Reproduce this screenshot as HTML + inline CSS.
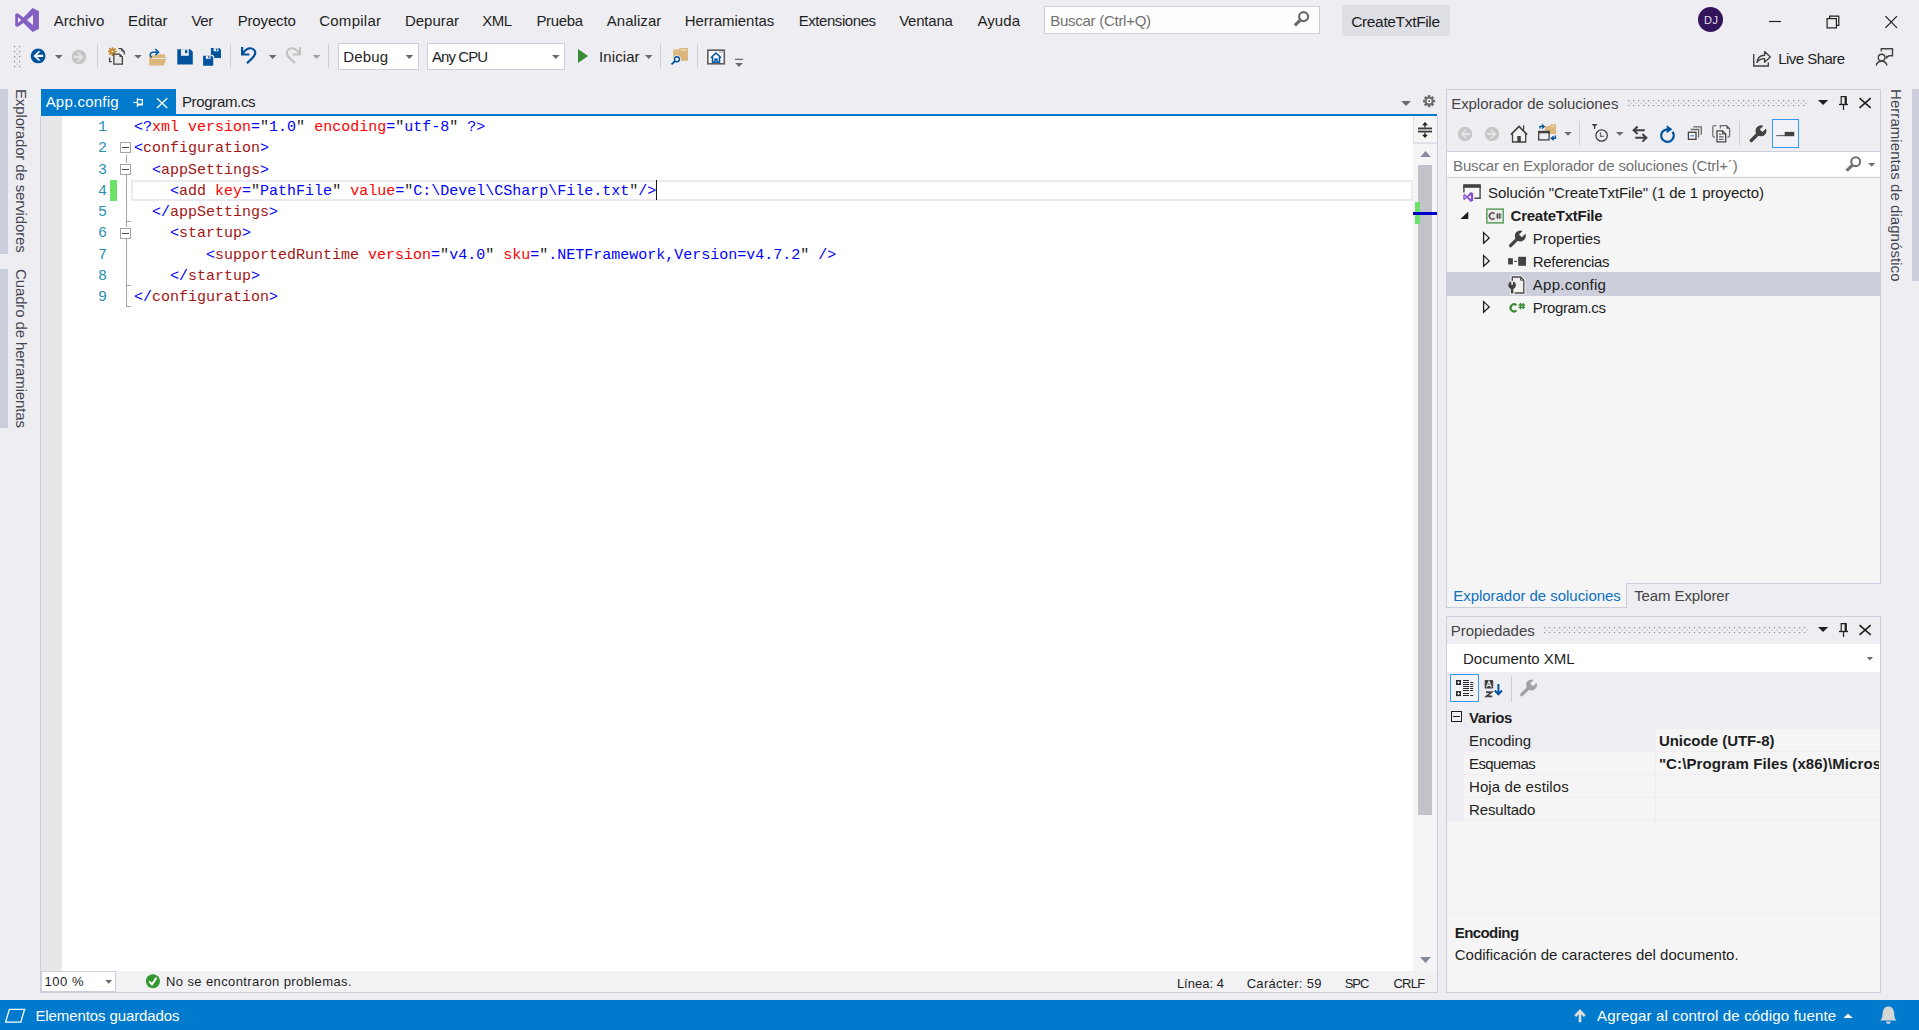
<!DOCTYPE html>
<html><head><meta charset="utf-8"><title>CreateTxtFile - Microsoft Visual Studio</title>
<style>
*{box-sizing:border-box;margin:0;padding:0}
html,body{width:1919px;height:1030px;overflow:hidden}
body{position:relative;background:#eeeef2;font-family:"Liberation Sans",sans-serif;font-size:15px;color:#1e1e1e}
.a{position:absolute}
.t{position:absolute;white-space:pre;line-height:1;display:block}
.b{position:absolute;background:#cccedb}
.v{position:absolute;writing-mode:vertical-rl;white-space:pre;line-height:1;font-size:15px;color:#444450}
.code{position:absolute;left:134px;font-family:"Liberation Mono",monospace;font-size:15px;line-height:1;white-space:pre;height:16px}
.ln{position:absolute;left:62px;width:45px;text-align:right;font-family:"Liberation Mono",monospace;font-size:15px;line-height:1;color:#2b91af}
.k{color:#0000ff}.e{color:#a31515}.r{color:#ff0000}.q{color:#1e1e1e}
.fb{position:absolute;left:120px;width:11px;height:11px;border:1px solid #a5a5a5;background:#fff}
.fb:after{content:"";position:absolute;left:1px;top:4px;width:7px;height:1px;background:#4a4a4a}
.g{position:absolute;background:#a5a5a5}
svg{position:absolute;overflow:visible}
</style></head><body>

<!-- ================= left auto-hide strip ================= -->
<div class="a" style="left:0;top:89px;width:8px;height:165px;background:#cccedb"></div>
<div class="a" style="left:0;top:269px;width:8px;height:159px;background:#cccedb"></div>
<div class="v" id="v1" style="left:14px;top:89px;letter-spacing:-0.13px">Explorador de servidores</div>
<div class="v" id="v2" style="left:14px;top:269px;letter-spacing:-0.13px">Cuadro de herramientas</div>

<!-- ================= right auto-hide strip ================= -->
<div class="a" style="left:1912px;top:89px;width:7px;height:192px;background:#cccedb"></div>
<div class="v" id="v3" style="left:1889px;top:89px;letter-spacing:0.06px">Herramientas de diagnóstico</div>

<!-- ================= title bar widgets ================= -->
<div class="a" style="left:1044px;top:6px;width:276px;height:28px;background:#fefefe;border:1px solid #cccedb"></div>
<div class="a" style="left:1342px;top:5px;width:108px;height:31px;background:#dddfe5"></div>
<div class="a" style="left:1698px;top:7px;width:25px;height:25px;border-radius:50%;background:#32145a"></div>

<!-- ================= toolbar combos ================= -->
<div class="a" style="left:338px;top:43px;width:81px;height:27px;background:#fff;border:1px solid #cccedb"></div>
<div class="a" style="left:427px;top:43px;width:138px;height:27px;background:#fff;border:1px solid #cccedb"></div>

<!-- ================= document well ================= -->
<div class="a" style="left:41px;top:89px;width:135px;height:25px;background:#007acc"></div>
<div class="a" style="left:41px;top:114px;width:1396px;height:2px;background:#007acc"></div>
<div class="a" style="left:40px;top:116px;width:1px;height:877px;background:#cccedb"></div>
<div class="a" style="left:41px;top:116px;width:1396px;height:855px;background:#fff"></div>
<div class="a" style="left:41px;top:116px;width:21px;height:855px;background:#e6e7e8"></div>
<!-- scrollbar -->
<div class="a" style="left:1413px;top:116px;width:24px;height:855px;background:#f5f5f5"></div>
<div class="a" style="left:1413px;top:116px;width:24px;height:28px;background:#f5f5f5;border-left:1px solid #dfdfe8;border-bottom:2px solid #dfdfe8"></div>
<div class="a" style="left:1418px;top:165px;width:14px;height:650px;background:#c2c3c9"></div>
<div class="a" style="left:1415px;top:202px;width:5px;height:22px;background:#6ce26c"></div>
<div class="a" style="left:1413px;top:212px;width:24px;height:3px;background:#0000cd"></div>
<div class="a" style="left:1437px;top:116px;width:1px;height:877px;background:#cccedb"></div>
<!-- bottom editor bar -->
<div class="a" style="left:41px;top:971px;width:1396px;height:21px;background:#f2f2f5"></div>
<div class="a" style="left:40px;top:992px;width:1398px;height:1px;background:#cccedb"></div>
<div class="a" style="left:41px;top:971px;width:75px;height:21px;background:#fff;border:1px solid #cccedb"></div>

<!-- current line + change bar + caret -->
<div class="a" style="left:131px;top:180px;width:1282px;height:21px;border:2px solid #eaeaf2"></div>
<div class="a" style="left:110px;top:180px;width:7px;height:21px;background:#6ce26c"></div>
<div class="a" style="left:656px;top:180px;width:1px;height:20px;background:#1a1a1a"></div>

<!-- outlining -->
<div class="g" style="left:126px;top:155px;width:1px;height:8px"></div>
<div class="g" style="left:126px;top:175px;width:1px;height:52px"></div>
<div class="g" style="left:126px;top:221px;width:5px;height:1px"></div>
<div class="g" style="left:126px;top:238px;width:1px;height:69px"></div>
<div class="g" style="left:126px;top:285px;width:5px;height:1px"></div>
<div class="g" style="left:126px;top:306px;width:5px;height:1px"></div>
<div class="fb" style="top:142px"></div>
<div class="fb" style="top:164px"></div>
<div class="fb" style="top:228px"></div>

<!-- line numbers -->
<div class="ln" style="top:120px">1</div><div class="ln" style="top:141px">2</div><div class="ln" style="top:163px">3</div>
<div class="ln" style="top:184px">4</div><div class="ln" style="top:205px">5</div><div class="ln" style="top:226px">6</div>
<div class="ln" style="top:248px">7</div><div class="ln" style="top:269px">8</div><div class="ln" style="top:290px">9</div>
<!-- code -->
<div class="code" style="top:120px"><span class="k">&lt;?</span><span class="r">xml</span> <span class="r">version</span><span class="k">=</span><span class="q">"</span><span class="k">1.0</span><span class="q">"</span> <span class="r">encoding</span><span class="k">=</span><span class="q">"</span><span class="k">utf-8</span><span class="q">"</span> <span class="k">?&gt;</span></div>
<div class="code" style="top:141px"><span class="k">&lt;</span><span class="e">configuration</span><span class="k">&gt;</span></div>
<div class="code" style="top:163px">  <span class="k">&lt;</span><span class="e">appSettings</span><span class="k">&gt;</span></div>
<div class="code" style="top:184px">    <span class="k">&lt;</span><span class="e">add</span> <span class="r">key</span><span class="k">=</span><span class="q">"</span><span class="k">PathFile</span><span class="q">"</span> <span class="r">value</span><span class="k">=</span><span class="q">"</span><span class="k">C:\Devel\CSharp\File.txt</span><span class="q">"</span><span class="k">/&gt;</span></div>
<div class="code" style="top:205px">  <span class="k">&lt;/</span><span class="e">appSettings</span><span class="k">&gt;</span></div>
<div class="code" style="top:226px">    <span class="k">&lt;</span><span class="e">startup</span><span class="k">&gt;</span></div>
<div class="code" style="top:248px">        <span class="k">&lt;</span><span class="e">supportedRuntime</span> <span class="r">version</span><span class="k">=</span><span class="q">"</span><span class="k">v4.0</span><span class="q">"</span> <span class="r">sku</span><span class="k">=</span><span class="q">"</span><span class="k">.NETFramework,Version=v4.7.2</span><span class="q">"</span> <span class="k">/&gt;</span></div>
<div class="code" style="top:269px">    <span class="k">&lt;/</span><span class="e">startup</span><span class="k">&gt;</span></div>
<div class="code" style="top:290px"><span class="k">&lt;/</span><span class="e">configuration</span><span class="k">&gt;</span></div>

<!-- ================= solution explorer ================= -->
<div class="a" style="left:1446px;top:89px;width:435px;height:495px;border:1px solid #cccedb;background:#eeeef2"></div>
<div class="a" style="left:1447px;top:151px;width:433px;height:27px;background:#fff;border-top:1px solid #cccedb;border-bottom:1px solid #cccedb"></div>
<div class="a" style="left:1447px;top:178px;width:433px;height:405px;background:#f5f5f5"></div>
<div class="a" style="left:1447px;top:272px;width:433px;height:24px;background:#cccedb"></div>
<div class="a" style="left:1772px;top:119px;width:27px;height:29px;border:1px solid #3399ff;background:#f3f3f7"></div>
<!-- tabs -->
<div class="a" style="left:1446px;top:583px;width:181px;height:25px;background:#f5f5f5;border:1px solid #cccedb;border-top:none"></div>

<!-- ================= properties ================= -->
<div class="a" style="left:1446px;top:616px;width:435px;height:377px;border:1px solid #cccedb;background:#eeeef2"></div>
<div class="a" style="left:1447px;top:644px;width:433px;height:28px;background:#fff"></div>
<div class="a" style="left:1450px;top:674px;width:29px;height:28px;border:1px solid #3399ff;background:#f3f3f7"></div>
<div class="a" style="left:1511px;top:676px;width:1px;height:26px;background:#cccedb"></div>
<div class="a" style="left:1447px;top:729px;width:433px;height:263px;background:#f5f5f5"></div>
<div class="a" style="left:1447px;top:729px;width:17px;height:92px;background:#eeeef2"></div>
<div class="a" style="left:1464px;top:729px;width:191px;height:23px;background:#eeeef2"></div>
<div class="a" style="left:1464px;top:751px;width:416px;height:1px;background:#eeeef2"></div>
<div class="a" style="left:1464px;top:774px;width:416px;height:1px;background:#eeeef2"></div>
<div class="a" style="left:1464px;top:797px;width:416px;height:1px;background:#eeeef2"></div>
<div class="a" style="left:1447px;top:820px;width:433px;height:1px;background:#eeeef2"></div>
<div class="a" style="left:1655px;top:729px;width:1px;height:92px;background:#eeeef2"></div>
<div class="a" style="left:1447px;top:913px;width:433px;height:1px;background:#eeeef2"></div>
<div class="a" style="left:1451px;top:711px;width:11px;height:11px;border:1px solid #1e1e1e"></div>
<div class="a" style="left:1453px;top:716px;width:7px;height:1px;background:#1e1e1e"></div>

<!-- ================= status bar ================= -->
<div class="a" style="left:0;top:1000px;width:1919px;height:30px;background:#007acc"></div>

<svg class="a" style="left:0;top:0" width="1919" height="1030" viewBox="0 0 1919 1030">
<defs>
<pattern id="gripA" x="1628" y="100" width="5" height="5" patternUnits="userSpaceOnUse"><rect x="0" y="0" width="1.25" height="1.25" fill="#8c8c92"/><rect x="2.5" y="2.5" width="1.25" height="1.25" fill="#b6b6bc"/></pattern>
<pattern id="gripB" x="1543.9" y="627" width="5" height="5" patternUnits="userSpaceOnUse"><rect x="0" y="0" width="1.25" height="1.25" fill="#8c8c92"/><rect x="2.5" y="2.5" width="1.25" height="1.25" fill="#b6b6bc"/></pattern>
<g id="dd"><path d="M0 0h7.6l-3.8 3.9z"/></g>
<mask id="wm"><rect x="-2" y="-2" width="22" height="22" fill="#000"/><circle cx="12" cy="5.600" r="5.500" fill="#fff"/><path d="M10 7.600L2.300 15.300" stroke="#fff" stroke-width="3.400" stroke-linecap="round"/><path d="M10.700 4.200L13.500 6.900 18.500 1.900 15.700 -0.800z" fill="#000"/></mask>
<g id="wrench"><rect x="-2" y="-2" width="22" height="22" mask="url(#wm)"/></g>
<g id="tri"><path d="M0.6 0.6l5.6 5.3-5.6 5.4z" fill="none" stroke="#1e1e1e" stroke-width="1.3" stroke-linejoin="miter"/></g>
</defs>

<!-- VS logo -->
<path fill="#865fc5" fill-rule="evenodd" d="M15.2 14.2L17.4 13 23.4 17.4 32.5 7.9 38.9 10.9V28.9L32.5 32.1 23.4 23 17.4 27 15.2 25.8zM18 16.9V23.1L21.1 20zM33 14.9L26.9 20 33 25.1z"/>

<!-- title search magnifier -->
<g stroke="#6a6a6a" fill="none"><circle cx="1303.6" cy="16.6" r="4.5" stroke-width="2.2"/><path d="M1300.2 20.2L1294.9 25.3" stroke-width="3.2"/></g>

<!-- window buttons -->
<path d="M1769 21.5h12" stroke="#1e1e1e" stroke-width="1.2"/>
<g fill="none" stroke="#1e1e1e" stroke-width="1.2"><rect x="1827.1" y="18.6" width="9.3" height="9.3"/><path d="M1829.6 18.6V16.2H1838.8V25.4H1836.4"/></g>
<path d="M1885.4 16.2L1897 27.8M1897 16.2L1885.4 27.8" stroke="#1e1e1e" stroke-width="1.2"/>

<!-- live share -->
<g fill="none" stroke="#424242" stroke-width="1.4"><path d="M1753.7 54V66H1768.3V62.600"/><path d="M1757 62.5C1757.5 57.5 1760.5 55.2 1764.6 55.2V51.6L1770.3 56.9 1764.6 62.2V58.6C1761.3 58.5 1758.8 59.6 1757 62.5z" stroke-linejoin="round"/></g>
<!-- feedback -->
<g fill="none" stroke="#424242" stroke-width="1.4"><circle cx="1881.6" cy="57.6" r="3.3"/><path d="M1876.2 65.6C1876.8 62.3 1879 61.2 1881.6 61.2S1886.4 62.3 1887 65.6"/><path d="M1881.3 51.5V48.8H1892.5V55.8H1888.9L1886.6 57.8V55.8"/></g>

<!-- toolbar grip -->
<g fill="#8c8c92"><rect x="14" y="46" width="1.25" height="1.25"/><rect x="19" y="46" width="1.25" height="1.25"/><rect x="14" y="51" width="1.25" height="1.25"/><rect x="19" y="51" width="1.25" height="1.25"/><rect x="14" y="56" width="1.25" height="1.25"/><rect x="19" y="56" width="1.25" height="1.25"/><rect x="14" y="61" width="1.25" height="1.25"/><rect x="19" y="61" width="1.25" height="1.25"/><rect x="14" y="66" width="1.25" height="1.25"/><rect x="19" y="66" width="1.25" height="1.25"/></g>
<g fill="#b8b8be"><rect x="16.5" y="48.5" width="1.25" height="1.25"/><rect x="16.5" y="53.5" width="1.25" height="1.25"/><rect x="16.5" y="58.5" width="1.25" height="1.25"/><rect x="16.5" y="63.5" width="1.25" height="1.25"/></g>

<!-- back / forward -->
<circle cx="38.1" cy="55.9" r="7.4" fill="#00539c"/><path d="M33.4 55.9L38.3 51.2H40.6L37.2 54.7H43.2V57.1H37.2L40.6 60.6H38.3z" fill="#fff"/>
<use href="#dd" x="55" y="55" fill="#6a6a6a"/>
<circle cx="78.9" cy="57" r="7.3" fill="#c6c6c6"/><path d="M83.6 57L78.7 52.3H76.4L79.8 55.8H73.8V58.2H79.8L76.4 61.7H78.7z" fill="#e4e4e6"/>
<rect x="97" y="44" width="1" height="24" fill="#cccedb"/>

<!-- new item -->
<g stroke="#c27d1a" stroke-width="1.5"><path d="M112.4 47.2V55.9M108 51.5H116.8M109.3 48.4L115.5 54.6M115.5 48.4L109.3 54.6"/></g>
<circle cx="112.4" cy="51.5" r="1.1" fill="#eeeef2"/>
<g fill="none" stroke="#424242" stroke-width="1.3"><path d="M118.5 48.6H121.3L124.2 51.5V54.5"/><path d="M113.8 54.1H119.5L122.4 57V64.2H113.8z" fill="#e8e8ec"/><path d="M109.6 57.5V61.6H111.8"/></g>
<path d="M119.5 54.1V57H122.4z" fill="#424242"/><path d="M121.3 48.6V51.5H124.2z" fill="#424242"/>
<use href="#dd" x="134.2" y="54.9" fill="#6a6a6a"/>

<!-- open folder -->
<path d="M149.2 65.6V55.6H156.5L157.8 54.2H165V57.2H166.7L163.9 65.6z" fill="#dcb67a"/>
<path d="M152.5 58.4H166.2" stroke="#eeeef2" stroke-width="0.9"/>
<g fill="none" stroke="#00539c" stroke-width="1.5"><path d="M151.6 57.4C149.4 55.8 149.6 52.4 152.8 52.2H158"/><path d="M155.3 49.1L158.5 52.2 155.3 55.3"/></g>

<!-- save -->
<path d="M177.3 49.2H190.2L192.8 51.8V64.4H177.3z" fill="#00539c"/><rect x="181" y="49.2" width="7.8" height="6.6" fill="#e8e8ec"/><rect x="185" y="50.2" width="2.3" height="2.8" fill="#00539c"/>
<!-- save all -->
<path d="M210.9 48.1H219.4L221 49.7V58H210.9z" fill="#00539c"/><rect x="213.6" y="48.1" width="4.8" height="3.2" fill="#e8e8ec"/><rect x="216" y="48.6" width="1.2" height="2" fill="#00539c"/>
<path d="M202.1 54.7H212.6L214.2 56.3V66.6H202.1z" fill="#eeeef2"/>
<path d="M203.1 55.7H211.6L213.2 57.3V65.7H203.1z" fill="#00539c"/><rect x="205.8" y="55.7" width="4.8" height="3.2" fill="#e8e8ec"/><rect x="208.2" y="56.2" width="1.2" height="2" fill="#00539c"/>
<rect x="230" y="44" width="1" height="24" fill="#cccedb"/>

<!-- undo / redo -->
<g fill="none" stroke="#00539c" stroke-width="2.2"><path d="M242.1 47V54.5H249.4"/><path d="M242.6 54C246.5 47.3 252.3 47 254.6 50.5 256.6 53.7 254.3 56.3 251.8 58.6L247 63.3"/></g>
<use href="#dd" x="268.9" y="55" fill="#6a6a6a"/>
<g fill="none" stroke="#c3c3c6" stroke-width="2.2"><path d="M300 47V54.5H292.7"/><path d="M299.5 54C295.600 47.3 289.8 47 287.5 50.5 285.5 53.7 287.8 56.3 290.3 58.6L295.100 63.3"/></g>
<use href="#dd" x="312.8" y="55" fill="#a0a0a4"/>
<rect x="328" y="44" width="1" height="24" fill="#cccedb"/>

<!-- combos arrows -->
<use href="#dd" x="405.600" y="55" fill="#6a6a6a"/>
<use href="#dd" x="552" y="55" fill="#6a6a6a"/>

<!-- start -->
<path d="M578 48.9L588.100 56 578 63.100z" fill="#388a34"/>
<use href="#dd" x="645" y="55.100" fill="#6a6a6a"/>
<rect x="660" y="44" width="1" height="24" fill="#cccedb"/>
<!-- find in files -->
<path d="M673.200 60.800V49.500H678.400L679.700 47.900H688V60.800z" fill="#dcb67a"/><rect x="680.600" y="49.300" width="6" height="1.300" fill="#eeeef2" opacity=".7"/>
<circle cx="676.900" cy="59.200" r="3.900" fill="#eeeef2"/><path d="M675 61.200L670.600 65.300" stroke="#eeeef2" stroke-width="4"/>
<g stroke="#00539c" fill="none"><circle cx="676.900" cy="59.200" r="2.500" stroke-width="1.400" fill="#f4f4f8"/><path d="M675 61.100L671.500 64.400" stroke-width="1.900"/></g>
<rect x="697" y="44" width="1" height="24" fill="#cccedb"/>
<!-- window/home icon -->
<rect x="707.800" y="50.200" width="16.500" height="13.600" fill="#f8f8fa" stroke="#5e5e5e" stroke-width="1.600"/>
<path d="M711 57.800L716 53 721 57.800M712.500 57V62.300H715V59.200H717V62.300H719.500V57" fill="none" stroke="#00539c" stroke-width="1.500"/>
<rect x="719.400" y="51.600" width="1.200" height="1" fill="#5e5e5e"/><rect x="721.400" y="51.600" width="1.200" height="1" fill="#5e5e5e"/>
<!-- overflow -->
<rect x="735" y="58.800" width="8" height="1.200" fill="#6a6a6a"/><path d="M735.200 63H742.800L739 66.900z" fill="#6a6a6a"/>

<!-- tab pin + close -->
<g stroke="#fff" fill="none" stroke-width="1.200"><path d="M133.200 102.500H137.400M137.400 98V107M137.400 99.600H142.400V105H137.400M137.400 104H142.400"/><path d="M157 98.300L167.200 108M167.200 98.300L157 108" stroke-width="1.400"/></g>
<!-- tab well dropdown + gear -->
<path d="M1401.200 100.900H1410.900L1406.050 105.900z" fill="#6a6a6a"/>
<g transform="translate(1429.100 101.100)" fill="#6a6a6a"><circle r="4.300"/><g><rect x="-1.300" y="-6" width="2.600" height="12"/><rect x="-1.300" y="-6" width="2.600" height="12" transform="rotate(45)"/><rect x="-1.300" y="-6" width="2.600" height="12" transform="rotate(90)"/><rect x="-1.300" y="-6" width="2.600" height="12" transform="rotate(135)"/></g><circle r="2.500" fill="#eeeef2"/><circle r="1" fill="#6a6a6a"/></g>
<!-- split icon -->
<rect x="1418" y="128" width="14" height="4" fill="#b4b4b8"/><rect x="1418" y="127.600" width="14" height="1.200" fill="#1e1e1e"/><rect x="1418" y="131.200" width="14" height="1.200" fill="#1e1e1e"/>
<g stroke="#1e1e1e" stroke-width="1.300"><path d="M1425 127.600V124M1425 132.400V136"/></g><path d="M1422.100 125.200L1425 122.100 1427.900 125.200zM1422.100 134.800L1425 137.900 1427.900 134.800z" fill="#1e1e1e"/>
<!-- scrollbar arrows -->
<path d="M1420.300 157L1425.600 151.100 1430.900 157z" fill="#868999"/>
<path d="M1420 957L1425.500 962.900 1431 957z" fill="#868999"/>

<!-- ============ solution explorer title ============ -->
<rect x="1628" y="100" width="179" height="6.300" fill="url(#gripA)"/>
<path d="M1818 99.900H1828.200L1823.100 105z" fill="#1e1e1e"/>
<g id="pinv" stroke="#1e1e1e" fill="none"><path d="M1841.200 104V96.700H1846V104" stroke-width="1.200"/><path d="M1845.600 96.700V104" stroke-width="2"/><path d="M1839 104.500H1848" stroke-width="1.300"/><path d="M1843.500 105V110" stroke-width="1.200"/></g>
<path id="xv" d="M1859.500 98.200L1870.700 107.800M1870.700 98.200L1859.500 107.800" stroke="#1e1e1e" stroke-width="1.600"/>
<!-- toolbar -->
<circle cx="1465" cy="134" r="7.200" fill="#c6c6c6"/><path d="M1460.400 134L1465.200 129.400H1467.500L1464.100 132.800H1470V135.200H1464.100L1467.500 138.600H1465.200z" fill="#e4e4e6"/>
<circle cx="1492" cy="134" r="7.200" fill="#c6c6c6"/><path d="M1496.600 134L1491.800 129.400H1489.500L1492.900 132.800H1487V135.200H1492.900L1489.500 138.600H1491.800z" fill="#e4e4e6"/>
<!-- home -->
<path d="M1512.500 134V142H1525.700V134L1519 127.500z" fill="#f0f0f2"/>
<g fill="none" stroke="#424242"><path d="M1510.900 134.600L1519 126.400 1527.100 134.600" stroke-width="1.700"/><path d="M1512.500 134V142H1525.700V134" stroke-width="1.300"/><path d="M1523.600 130.600V125.200" stroke-width="1.200"/></g><rect x="1517.300" y="136" width="3.500" height="6" fill="#424242"/>
<!-- sync with active doc -->
<path d="M1545 134V126H1549.400L1550.500 124.200H1556V134z" fill="#dcb67a"/><rect x="1551.200" y="125.700" width="3.600" height="0.900" fill="#eeeef2" opacity=".7"/>
<rect x="1538.700" y="131.500" width="10.400" height="8.400" fill="#eeeef2" stroke="#424242" stroke-width="1.300"/><rect x="1538.100" y="130.900" width="11.600" height="2.400" fill="#424242"/>
<g fill="none" stroke="#00539c" stroke-width="1.400"><path d="M1540 128.600V126.400H1543.500M1542 124.400L1544.200 126.400 1542 128.400"/><path d="M1555.400 135.400V138.200H1552M1553.600 136.200L1551.400 138.200 1553.600 140.200"/></g>
<use href="#dd" x="1564.200" y="131.900" fill="#6a6a6a"/>
<rect x="1579" y="121" width="1" height="24" fill="#cccedb"/>
<!-- pending changes filter -->
<path d="M1591.600 124H1597.700L1595.300 126.600V128.900H1594V126.600z" fill="#424242"/>
<g fill="none" stroke="#424242"><circle cx="1601.600" cy="135.500" r="5.700" stroke-width="1.300"/><path d="M1600.500 132.200V136.300H1603.800" stroke-width="1.300" stroke="#6a6a6a"/></g>
<use href="#dd" x="1616" y="131.900" fill="#6a6a6a"/>
<!-- swap arrows -->
<g fill="none" stroke="#424242" stroke-width="2"><path d="M1644.800 130.200H1634M1637.600 126.400L1633.600 130.200 1637.600 134"/><path d="M1635.200 137.800H1646M1642.400 134L1646.400 137.800 1642.400 141.600"/></g>
<!-- refresh -->
<path d="M1672.500 131.800A6.300 6.300 0 1 1 1667 129.300" fill="none" stroke="#00539c" stroke-width="2.300"/><path d="M1666.700 125.200L1672.400 129.300 1666.700 133.300z" fill="#00539c"/>
<!-- collapse all -->
<g fill="none" stroke="#6a6a6a" stroke-width="1.300"><path d="M1693.300 126.800H1701.300V134.800"/><path d="M1690.600 129.500H1698.600V137.500"/></g>
<rect x="1688.400" y="132.300" width="7.600" height="7" fill="#f4f4f6" stroke="#424242" stroke-width="1.300"/><rect x="1690.400" y="135.200" width="3.600" height="1.200" fill="#3b8bd0"/>
<!-- show all files -->
<g fill="none" stroke="#6a6a6a" stroke-width="1.200"><path d="M1716.300 125.700H1714.500Q1712.800 125.700 1712.800 127.400V135.400Q1712.800 137.100 1714.500 137.100H1715"/><path d="M1720.300 128.500V125.700H1726.600L1729.600 128.700V135.400Q1729.600 137.100 1727.900 137.100H1727.400"/></g><path d="M1726.600 125.700V128.700H1729.600z" fill="#424242"/>
<path d="M1717 130.800H1722.500L1725.700 134V141.800H1717z" fill="#f4f4f6" stroke="#424242" stroke-width="1.300"/><path d="M1722.500 130.800V134H1725.700" fill="none" stroke="#424242" stroke-width="1"/>
<g stroke="#424242" stroke-width="1"><path d="M1719 134.300H1721.500M1719 136.800H1723.700M1719 139.300H1723.700"/></g>
<rect x="1739" y="121" width="1" height="24" fill="#cccedb"/>
<use href="#wrench" x="1749" y="125.200" fill="#424242"/>
<!-- preview selected -->
<rect x="1776.200" y="135" width="9" height="1.200" fill="#6a6a6a"/><rect x="1784.700" y="131.900" width="9.500" height="4.300" fill="#424242"/>
<!-- search -->
<g stroke="#717171" fill="none"><circle cx="1855.700" cy="161.700" r="4.400" stroke-width="2.100"/><path d="M1852.500 165.100L1846.600 170.700" stroke-width="3.200"/></g>
<path d="M1868 163H1875.400L1871.700 166.800z" fill="#717171"/>

<!-- tree icons -->
<g fill="none" stroke="#4a4a4a" stroke-width="1.400"><path d="M1463.900 192.600V186H1480.100V198.300H1474.400"/></g><rect x="1463.200" y="184.200" width="17.600" height="3.600" fill="#424242"/>
<path fill="#8a4fd0" fill-rule="evenodd" d="M1463.300 194.700L1464.300 194.100 1467 196.100 1470.700 192 1473.200 193.200V200.700L1470.700 201.900 1467 198.100 1464.300 200.100 1463.300 199.500zM1464.600 195.800V198.400L1465.900 197.100zM1470.900 194.900L1468.300 197.100 1470.900 199.300z"/>
<path d="M1468.300 211.400V219.100H1460.400z" fill="#1e1e1e"/>
<rect x="1486.800" y="209.100" width="16.400" height="13.800" fill="#ececec" stroke="#5da25d" stroke-width="1.500"/>
<g fill="none" stroke="#505050"><path d="M1494.600 213.700A3.100 3.100 0 1 0 1494.600 218.300" stroke-width="1.500"/><path d="M1497.600 213V219M1499.700 213V219M1496 214.900H1501.300M1496 217.100H1501.300" stroke-width="1"/></g>
<use href="#tri" x="1483" y="232"/>
<use href="#wrench" x="1508.300" y="230.300" fill="#424242"/>
<use href="#tri" x="1483" y="255"/>
<rect x="1508.100" y="258.200" width="4.800" height="6.200" fill="#424242"/><rect x="1514.300" y="260.800" width="2.600" height="1.200" fill="#424242"/><rect x="1518.200" y="256.800" width="7.800" height="9" fill="#424242"/>
<!-- config file -->
<path d="M1510.500 275.300H1521.300L1525.500 279.500V294.700H1509.800V288.500Q1507.800 285.500 1510.500 282.500z" fill="#f4f4f6" opacity=".9"/>
<path d="M1512.300 283V277H1520.600L1523.800 280.200V293H1514.600" fill="#f0f0f0" stroke="#4a4a4a" stroke-width="1.300"/><path d="M1520.600 277V280.200H1523.800" fill="none" stroke="#4a4a4a" stroke-width="1"/>
<circle cx="1512.100" cy="285.300" r="3.700" fill="#424242"/><rect x="1510.900" y="287" width="2.400" height="6.600" rx="1" fill="#424242"/><rect x="1511.300" y="280.800" width="1.600" height="4" fill="#f4f4f6"/>
<use href="#tri" x="1483" y="301"/>
<path d="M1516.400 305.300A3.500 3.500 0 1 0 1516.400 310.500" fill="none" stroke="#388a34" stroke-width="2.100"/>
<g stroke="#388a34" stroke-width="1.300"><path d="M1520.500 303V309.200M1523.100 303V309.200M1518.600 305H1525M1518.600 307.300H1525"/></g>

<!-- ============ properties title ============ -->
<rect x="1543.900" y="627" width="264" height="6.300" fill="url(#gripB)"/>
<path d="M1818 626.900H1828.200L1823.100 632z" fill="#1e1e1e"/>
<use href="#pinv" y="527"/><use href="#xv" y="527"/>
<path d="M1866.800 657H1873L1869.900 660.400z" fill="#6a6a6a"/>
<!-- categorized -->
<g fill="#2a2a2a"><rect x="1456" y="680" width="5" height="5"/><rect x="1456" y="691.100" width="5" height="5"/>
<rect x="1463" y="680" width="6" height="1"/><rect x="1463" y="682" width="6" height="1"/><rect x="1463" y="684" width="6" height="1"/><rect x="1463" y="686" width="6" height="1"/><rect x="1463" y="688" width="6" height="1"/><rect x="1463" y="690" width="6" height="1"/><rect x="1463" y="693" width="6" height="1"/><rect x="1463" y="695" width="6" height="1"/>
<rect x="1470.200" y="682" width="3" height="1"/><rect x="1470.200" y="684" width="3" height="1"/><rect x="1470.200" y="686" width="3" height="1"/><rect x="1470.200" y="688" width="3" height="1"/><rect x="1470.200" y="690" width="3" height="1"/><rect x="1470.200" y="695" width="3" height="1"/></g>
<g fill="#fff"><rect x="1457.300" y="682" width="2.400" height="1"/><rect x="1458" y="681.300" width="1" height="2.400"/><rect x="1457.300" y="693.100" width="2.400" height="1"/><rect x="1458" y="692.400" width="1" height="2.400"/></g>
<!-- alphabetical -->
<rect x="1484.700" y="680" width="8.500" height="8.600" rx="0.800" fill="#424242"/><path d="M1486.500 687.200L1488.950 681.300 1491.400 687.200M1487.400 685.400H1490.500" fill="none" stroke="#e8e8ec" stroke-width="1.200"/>
<path d="M1486 692.100H1491.600L1486.400 696.400H1492.200" fill="none" stroke="#424242" stroke-width="1.700"/>
<path d="M1498.400 684V693.500M1494.800 690.500L1498.400 694.300 1502 690.500" fill="none" stroke="#00539c" stroke-width="2"/>
<use href="#wrench" x="1519.500" y="679.300" fill="#a2a2a6"/>

<!-- bottom bar -->
<path d="M105.300 980H112.100L108.700 983.800z" fill="#6a6a6a"/>
<circle cx="152.900" cy="981.200" r="7" fill="#339933"/><path d="M149.200 981.300L152 984.400 156.500 977.700" fill="none" stroke="#fff" stroke-width="2"/>
<!-- status bar -->
<path d="M9.400 1009.300H24.600L20.800 1022.100H5.600z" fill="none" stroke="#fff" stroke-width="1.300"/>
<path d="M1580 1022.300V1011.600M1575.200 1016.200L1580 1011 1584.800 1016.200" fill="none" stroke="#dedede" stroke-width="2.600"/>
<path d="M1843.400 1018H1852.800L1848.100 1013.800z" fill="#fff"/>
<path d="M1880 1020.600C1882.800 1018.800 1882.300 1015 1882.800 1011.700 1883.300 1008.100 1885.600 1006.400 1888.400 1006.400S1893.500 1008.100 1894 1011.700C1894.500 1015 1894 1018.800 1896.800 1020.600z" fill="#d6d6d6"/><path d="M1886 1021.500A2.400 2.400 0 0 0 1890.800 1021.500z" fill="#d6d6d6"/>
</svg>


<span class="t" style="left:53.65px;top:13px;font-size:15px;color:#1e1e1e;letter-spacing:0.111px;">Archivo</span>
<span class="t" style="left:127.90px;top:13px;font-size:15px;color:#1e1e1e;letter-spacing:0.103px;">Editar</span>
<span class="t" style="left:191.40px;top:13px;font-size:15px;color:#1e1e1e;letter-spacing:-0.283px;">Ver</span>
<span class="t" style="left:237.65px;top:13px;font-size:15px;color:#1e1e1e;letter-spacing:-0.143px;">Proyecto</span>
<span class="t" style="left:319.15px;top:13px;font-size:15px;color:#1e1e1e;letter-spacing:0.276px;">Compilar</span>
<span class="t" style="left:404.90px;top:13px;font-size:15px;color:#1e1e1e;letter-spacing:-0.001px;">Depurar</span>
<span class="t" style="left:482.15px;top:13px;font-size:15px;color:#1e1e1e;letter-spacing:-0.447px;">XML</span>
<span class="t" style="left:536.40px;top:13px;font-size:15px;color:#1e1e1e;letter-spacing:-0.335px;">Prueba</span>
<span class="t" style="left:606.65px;top:13px;font-size:15px;color:#1e1e1e;letter-spacing:0.071px;">Analizar</span>
<span class="t" style="left:684.65px;top:13px;font-size:15px;color:#1e1e1e;letter-spacing:-0.030px;">Herramientas</span>
<span class="t" style="left:798.65px;top:13px;font-size:15px;color:#1e1e1e;letter-spacing:-0.427px;">Extensiones</span>
<span class="t" style="left:899.15px;top:13px;font-size:15px;color:#1e1e1e;letter-spacing:-0.227px;">Ventana</span>
<span class="t" style="left:977.40px;top:13px;font-size:15px;color:#1e1e1e;letter-spacing:0.109px;">Ayuda</span>
<span class="t" style="left:1050.15px;top:13px;font-size:15px;color:#717171;letter-spacing:-0.261px;">Buscar (Ctrl+Q)</span>
<span class="t" style="left:1351.15px;top:14px;font-size:15.5px;color:#1e1e1e;letter-spacing:-0.340px;">CreateTxtFile</span>
<span class="t" style="left:1703.90px;top:15px;font-size:11px;color:#e4dfea;letter-spacing:0.647px;">DJ</span>
<span class="t" style="left:1778.20px;top:51px;font-size:15px;color:#1e1e1e;letter-spacing:-0.524px;">Live Share</span>
<span class="t" style="left:343.20px;top:49px;font-size:15px;color:#1e1e1e;letter-spacing:0.174px;">Debug</span>
<span class="t" style="left:431.90px;top:49px;font-size:15px;color:#1e1e1e;letter-spacing:-0.915px;">Any CPU</span>
<span class="t" style="left:599.00px;top:49px;font-size:15px;color:#1e1e1e;letter-spacing:0.097px;">Iniciar</span>
<span class="t" style="left:45.65px;top:94px;font-size:15px;color:#ffffff;letter-spacing:0.229px;">App.config</span>
<span class="t" style="left:181.90px;top:94px;font-size:15px;color:#1e1e1e;letter-spacing:-0.332px;">Program.cs</span>
<span class="t" style="left:1451.20px;top:96px;font-size:15px;color:#444444;letter-spacing:-0.054px;">Explorador de soluciones</span>
<span class="t" style="left:1453.10px;top:158px;font-size:15px;color:#717171;letter-spacing:-0.162px;">Buscar en Explorador de soluciones (Ctrl+´)</span>
<span class="t" style="left:1488.00px;top:185px;font-size:15px;color:#1e1e1e;letter-spacing:-0.099px;">Solución "CreateTxtFile" (1 de 1 proyecto)</span>
<span class="t" style="left:1510.60px;top:208px;font-size:15px;color:#1e1e1e;font-weight:700;letter-spacing:-0.254px;">CreateTxtFile</span>
<span class="t" style="left:1532.80px;top:231px;font-size:15px;color:#1e1e1e;letter-spacing:-0.064px;">Properties</span>
<span class="t" style="left:1532.80px;top:254px;font-size:15px;color:#1e1e1e;letter-spacing:-0.325px;">Referencias</span>
<span class="t" style="left:1532.80px;top:277px;font-size:15px;color:#1e1e1e;letter-spacing:0.245px;">App.config</span>
<span class="t" style="left:1532.80px;top:300px;font-size:15px;color:#1e1e1e;letter-spacing:-0.399px;">Program.cs</span>
<span class="t" style="left:1453.30px;top:588px;font-size:15px;color:#0e70c0;letter-spacing:-0.041px;">Explorador de soluciones</span>
<span class="t" style="left:1634.20px;top:588px;font-size:15px;color:#444444;letter-spacing:-0.109px;">Team Explorer</span>
<span class="t" style="left:1450.80px;top:623px;font-size:15px;color:#444444;letter-spacing:-0.033px;">Propiedades</span>
<span class="t" style="left:1463.00px;top:651px;font-size:15px;color:#1e1e1e;letter-spacing:-0.010px;">Documento XML</span>
<span class="t" style="left:1469.00px;top:710px;font-size:15px;color:#1e1e1e;font-weight:700;letter-spacing:-0.326px;">Varios</span>
<span class="t" style="left:1469.00px;top:733px;font-size:15px;color:#1e1e1e;letter-spacing:-0.066px;">Encoding</span>
<span class="t" style="left:1469.00px;top:756px;font-size:15px;color:#1e1e1e;letter-spacing:-0.596px;">Esquemas</span>
<span class="t" style="left:1469.00px;top:779px;font-size:15px;color:#1e1e1e;letter-spacing:0.094px;">Hoja de estilos</span>
<span class="t" style="left:1469.00px;top:802px;font-size:15px;color:#1e1e1e;letter-spacing:-0.143px;">Resultado</span>
<span class="t" style="left:1658.90px;top:733px;font-size:15px;color:#1e1e1e;font-weight:700;letter-spacing:-0.009px;">Unicode (UTF-8)</span>
<span class="t" style="left:1658.90px;top:756px;font-size:15px;color:#1e1e1e;font-weight:700;letter-spacing:0.116px;width:220.1px;overflow:hidden;padding-bottom:5px;">"C:\Program Files (x86)\Microsoft</span>
<span class="t" style="left:1454.70px;top:925px;font-size:15px;color:#1e1e1e;font-weight:700;letter-spacing:-0.561px;">Encoding</span>
<span class="t" style="left:1454.70px;top:947px;font-size:15px;color:#1e1e1e;letter-spacing:0.010px;">Codificación de caracteres del documento.</span>
<span class="t" style="left:44.40px;top:975px;font-size:13px;color:#1e1e1e;letter-spacing:0.581px;">100 %</span>
<span class="t" style="left:166.00px;top:975px;font-size:13px;color:#1e1e1e;letter-spacing:0.394px;">No se encontraron problemas.</span>
<span class="t" style="left:1176.90px;top:977px;font-size:13px;color:#1e1e1e;letter-spacing:-0.000px;">Línea: 4</span>
<span class="t" style="left:1246.70px;top:977px;font-size:13px;color:#1e1e1e;letter-spacing:0.287px;">Carácter: 59</span>
<span class="t" style="left:1344.80px;top:977px;font-size:13px;color:#1e1e1e;letter-spacing:-1.117px;">SPC</span>
<span class="t" style="left:1393.40px;top:977px;font-size:13px;color:#1e1e1e;letter-spacing:-0.718px;">CRLF</span>
<span class="t" style="left:35.40px;top:1008px;font-size:15px;color:#ffffff;letter-spacing:-0.097px;">Elementos guardados</span>
<span class="t" style="left:1597.10px;top:1008px;font-size:15px;color:#ffffff;letter-spacing:0.165px;">Agregar al control de código fuente</span>
</body></html>
